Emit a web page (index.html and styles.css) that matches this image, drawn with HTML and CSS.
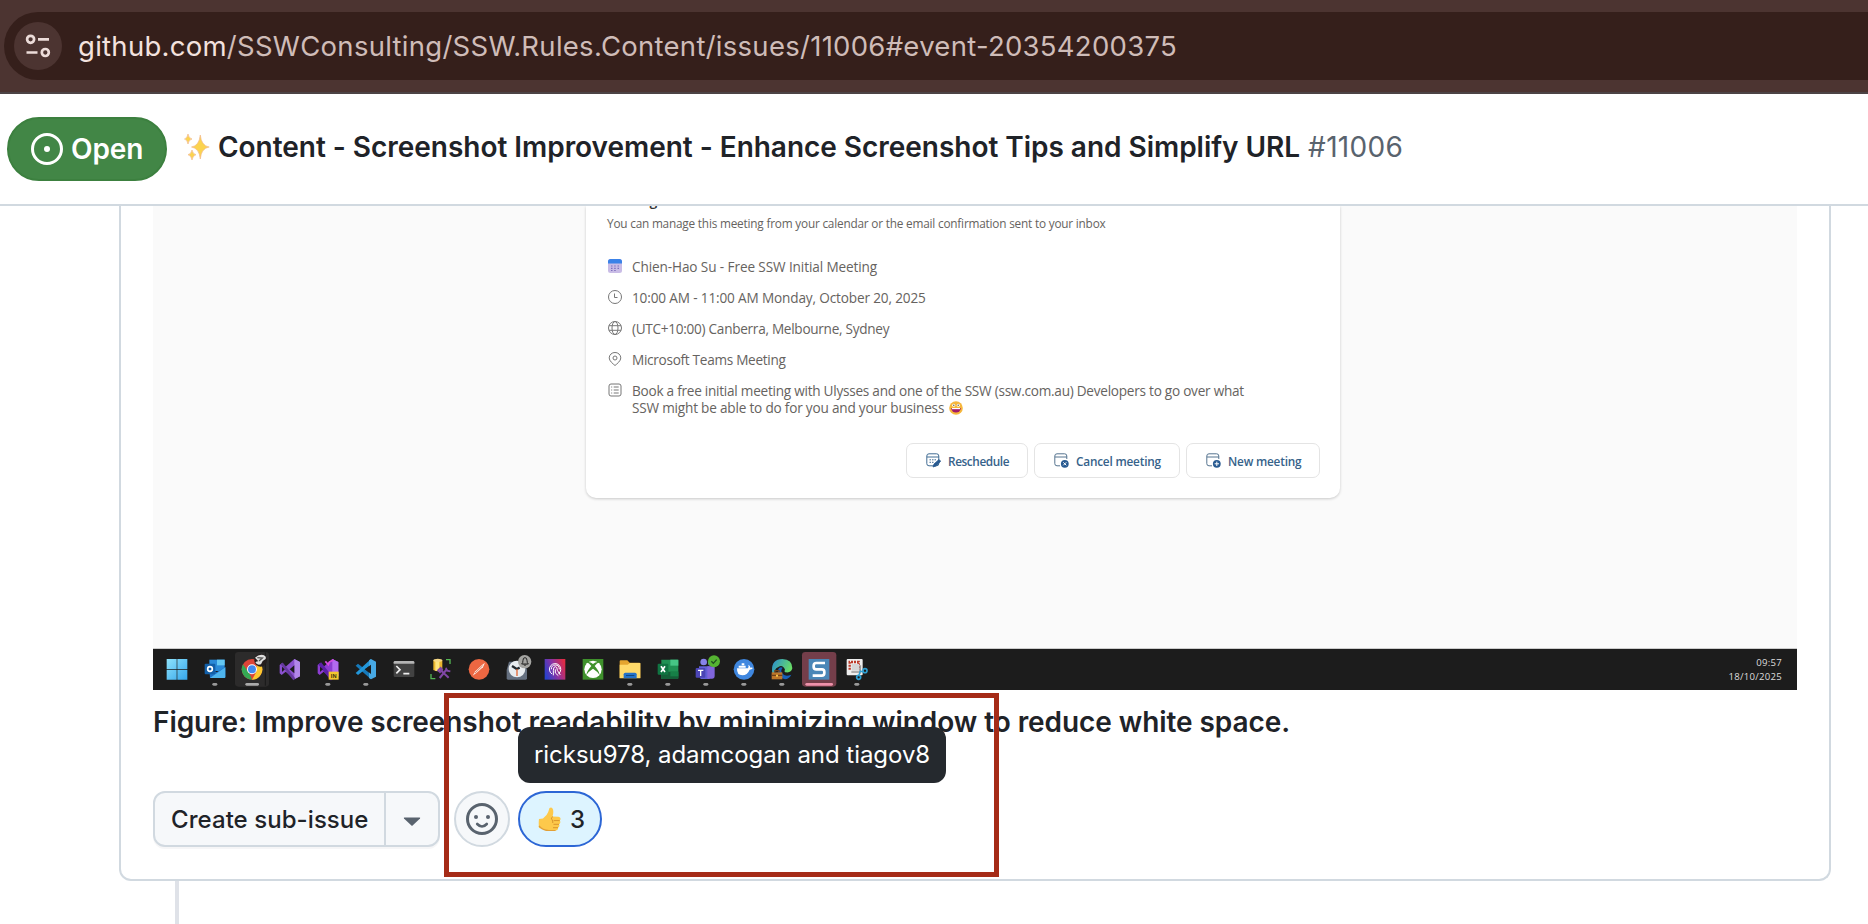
FILE: index.html
```html
<!DOCTYPE html>
<html lang="en">
<head>
<meta charset="utf-8">
<title>Content - Screenshot Improvement</title>
<link rel="stylesheet" href="styles.css">
</head>
<body>
<div class="browser-bar">
  <div class="omnibox">
    <span class="site-info">
      <svg width="48" height="48" viewBox="0 0 48 48" fill="none" stroke="#ecdcd9" stroke-width="2.7"><circle cx="16.6" cy="17.3" r="3.5"/><path d="M24 17.3h11M12.5 30.5h11"/><circle cx="31.3" cy="30.5" r="3.5"/></svg>
    </span>
    <span class="url"><span class="host">github.com</span>/SSWConsulting/SSW.Rules.Content/issues/11006#event-20354200375</span>
  </div>
</div>

<header class="issue-header">
  <span class="state">
    <svg width="32" height="32" viewBox="0 0 16 16" fill="#fff"><path d="M8 9.5a1.5 1.5 0 1 0 0-3 1.5 1.5 0 0 0 0 3Z"/><path d="M8 0a8 8 0 1 1 0 16A8 8 0 0 1 8 0ZM1.5 8a6.5 6.5 0 1 0 13 0 6.5 6.5 0 0 0-13 0Z"/></svg>
    <span class="state-text">Open</span>
  </span>
  <h1 class="title">
    <svg class="sparkles" width="26" height="28" viewBox="0 0 26 28"><g fill="#fbd34f" stroke="#f2b98c" stroke-width=".7"><path d="M16.300 2Q17.300 12.800 25.200 14Q17.300 15.200 16.300 26Q15.200 15.200 7.500 14Q15.200 12.800 16.300 2Z"/><path d="M4 1Q4.700 5.300 8 6Q4.700 6.700 4 11Q3.300 6.700.5 6Q3.300 5.300 4 1Z"/><path d="M8 17Q8.700 21 12 21.700Q8.700 22.400 8 27Q7.300 22.400 4 21.700Q7.300 21 8 17Z"/></g></svg>
    <span class="title-text">Content - Screenshot Improvement - Enhance Screenshot Tips and Simplify URL</span>
    <span class="number">#11006</span>
  </h1>
</header>

<main class="thread">
  <article class="issue-body">
    <div class="figure">
      <section class="meeting">
        <h2 class="meeting-title">Meeting details</h2>
        <p class="meeting-note">You can manage this meeting from your calendar or the email confirmation sent to your inbox</p>
        <ul class="details">
          <li><svg width="14" height="14" viewBox="0 0 14 14"><rect width="14" height="14" rx="2.500" fill="#c9bce6"/><path d="M0 4.500V2.500A2.500 2.500 0 0 1 2.500 0h9A2.500 2.500 0 0 1 14 2.500v2Z" fill="#3b82e8"/><path d="M3 7h1.500M6.200 7h1.500M9.500 7H11M3 9.300h1.500M6.200 9.300h1.500M9.500 9.300H11M3 11.500h1.500M6.200 11.500h1.500" stroke="#7f70bd" stroke-width="1.200"/></svg><span class="r1">Chien-Hao Su - Free SSW Initial Meeting</span></li>
          <li><svg class="line-icon" width="14" height="14" viewBox="0 0 14 14"><circle cx="7" cy="7" r="6.500"/><path d="M6.500 3.500v4H9.500"/></svg><span class="r2">10:00 AM - 11:00 AM Monday, October 20, 2025</span></li>
          <li><svg class="line-icon" width="14" height="14" viewBox="0 0 14 14"><circle cx="7" cy="7" r="6.500"/><ellipse cx="7" cy="7" rx="3" ry="6.500"/><path d="M1 4.700h12M1 9.300h12"/></svg><span class="r3">(UTC+10:00) Canberra, Melbourne, Sydney</span></li>
          <li><svg class="line-icon" width="14" height="14" viewBox="0 0 14 14"><path d="M7 13.500C5 11.800 1.200 9 1.200 5.900A5.600 5.600 0 0 1 7 .5a5.600 5.600 0 0 1 5.800 5.400C12.800 9 9 11.800 7 13.500Z"/><circle cx="7" cy="6" r="2"/></svg><span class="r4">Microsoft Teams Meeting</span></li>
          <li><svg class="line-icon" width="14" height="14" viewBox="0 0 14 14"><rect x="1" y="1" width="12" height="12" rx="2"/><path d="M3.200 4h1M5.700 4h5M3.200 7h1M5.700 7h5M3.200 10h1M5.700 10h5"/></svg><span class="r5">Book a free initial meeting with Ulysses and one of the SSW (ssw.com.au) Developers to go over what<br><span class="r6">SSW might be able to do for you and your business</span> <svg class="grin" width="14" height="14" viewBox="0 0 14 14"><circle cx="7" cy="7" r="6.800" fill="#f6b73c"/><path d="M2.200 7h9.600a4.800 4.600 0 0 1-9.600 0Z" fill="#a11b68"/><path d="M3 7h8v1.200H3Z" fill="#fff"/><circle cx="4.700" cy="4.200" r="1.500" fill="#fff"/><circle cx="9.300" cy="4.200" r="1.500" fill="#fff"/><circle cx="4.800" cy="4.200" r=".7" fill="#553"/><circle cx="9.200" cy="4.200" r=".7" fill="#553"/></svg></span></li>
        </ul>
        <div class="meeting-actions">
          <span class="mbtn b1"><svg width="15" height="15" viewBox="0 0 15 15" fill="none" stroke="#406c93"><rect x=".8" y=".8" width="12" height="12" rx="2.200"/><path d="M1 4h12" /><path d="M3.500 6.800h7M3.500 9.300h5" stroke-dasharray="1.500 1"/><path d="m7 14 1-3 5-4.500 1.700 1.700L10 13Z" fill="#285a91" stroke="#285a91" stroke-width=".8"/></svg><span>Reschedule</span></span>
          <span class="mbtn b2"><svg width="15" height="15" viewBox="0 0 15 15" fill="none" stroke="#56748f"><path d="M6 12.800H3A2.200 2.200 0 0 1 .8 10.600V3A2.200 2.200 0 0 1 3 .8h7.600A2.200 2.200 0 0 1 12.800 3v3M1 4h12"/><circle cx="10.800" cy="10.800" r="3.900" fill="#285a91" stroke="none"/><path d="m9.300 9.300 3 3m0-3-3 3" stroke="#fff"/></svg><span>Cancel meeting</span></span>
          <span class="mbtn b3"><svg width="15" height="15" viewBox="0 0 15 15" fill="none" stroke="#56748f"><path d="M6 12.800H3A2.200 2.200 0 0 1 .8 10.600V3A2.200 2.200 0 0 1 3 .8h7.600A2.200 2.200 0 0 1 12.800 3v3M1 4h12"/><circle cx="10.800" cy="10.800" r="3.900" fill="#285a91" stroke="none"/><path d="M10.800 8.600V13M8.600 10.800H13" stroke="#fff"/></svg><span>New meeting</span></span>
        </div>
      </section>

      <div class="taskbar">
        <div class="apps">
          <svg class="app" viewBox="-26 -30 113.400 123"><defs><linearGradient id="win" x2="1" y2="1"><stop stop-color="#8fe3fb"/><stop offset="1" stop-color="#35a6ec"/></linearGradient></defs><path d="M0 0h30v30H0ZM32 0h30v30H32ZM0 32h30v30H0ZM32 32h30v30H32Z" fill="url(#win)"/></svg>
          <svg class="app" viewBox="-26 -30 113.400 123"><path d="M14 2h46v34H14Z" fill="#2a8ad8"/><path d="M37 2h23v17H37Z" fill="#64c8f3"/><path d="M14 26l22 14 26-16v30q0 3-3 3H16Z" fill="#1f74ca"/><path d="m16 57 46-32v29q0 3-3 3Z" fill="#4eb5ee"/><rect y="14" width="32" height="32" rx="3" fill="#125fa8"/><circle cx="16" cy="30" r="7" fill="none" stroke="#fff" stroke-width="5"/><rect class="dot" x="23" y="72" width="15" height="8" rx="4"/></svg>
          <svg class="app" viewBox="-26 -30 113.400 123"><rect x="-20" y="-21" width="102" height="104" rx="10" fill="#2c2b2b"/><path d="M71-20v100" stroke="#191919" stroke-width="3"/><circle cx="31" cy="31" r="31" fill="#dc4438"/><path d="M4 16 24 45 31 62A31 31 0 0 1 4 16Z" fill="#34a853"/><path d="M31 62 44 39 45 17H59A31 31 0 0 1 31 62Z" fill="#fdc72f"/><circle cx="31" cy="31" r="15" fill="#fff"/><circle cx="31" cy="31" r="12" fill="#4288ed"/><circle cx="57" cy="4" r="19" fill="#241d1d"/><path d="M40-4q12-12 25-8 10 3 7 12l-9 6-5 10q-12 4-17-6 4-3 9-3Z" fill="#dedede"/><path d="m47-4 15 1-10 9" fill="none" stroke="#555" stroke-width="4"/><rect x="11" y="72" width="41" height="8" rx="4" fill="#aaa"/></svg>
          <svg class="app" viewBox="-26 -30 113.400 123"><path d="M44 0 61 9v43L44 61 18 38 6 48l-6-5V18l6-5 12 10Z" fill="#8a50ce"/><path d="M44 0 61 9v43l-17 9Z" fill="#b287ea"/><path d="M7 23v16l9-8ZM44 19 30 31l14 12Z" fill="#1c1c1c"/><path d="M6 13 44 61" stroke="#66399f" stroke-width="8"/></svg>
          <svg class="app" viewBox="-26 -30 113.400 123"><path d="M44 0 62 9v43L44 61 18 38 6 48l-6-5V18l6-5 12 10Z" fill="#8d3dd2"/><path d="M44 0 62 9v43l-18 9Z" fill="#b26af1"/><path d="m6 13 38 48" stroke="#5b20a8" stroke-width="11"/><path d="m23 7 9 10 3-8 13-7" fill="none" stroke="#d64be2" stroke-width="5"/><path d="M7 23v16l9-8Z" fill="#1c1c1c"/><rect x="33" y="38" width="30" height="24" fill="#f3c62e"/><text x="48" y="57" class="in-label">IN</text><rect class="dot" x="23" y="72" width="15" height="8" rx="4"/></svg>
          <svg class="app" viewBox="-26 -30 113.400 123"><path d="m0 20 7-6 39 31V61Z" fill="#167abb"/><path d="M46 0v17L7 48l-7-6Z" fill="#2297da"/><path d="m46 0 15 8v45l-15 8-6-4V4Z" fill="#47a8e4"/><path d="M46 17v28L27 31Z" fill="#1c1c1c"/><rect class="dot" x="23" y="72" width="15" height="8" rx="4"/></svg>
          <svg class="app" viewBox="-26 -30 113.400 123"><rect y="6" width="62" height="48" rx="4" fill="#424242"/><path d="M4 6h54q4 0 4 4v4H0v-4q0-4 4-4Z" fill="#b5b5b5"/><path d="m8 21 11 11L8 43M29 44h18" fill="none" stroke="#eee" stroke-width="5"/></svg>
          <svg class="app" viewBox="-26 -30 113.400 123"><path d="M8 4v29q15 8 27 0V4Z" fill="#ebb62f"/><path d="M14 6v29l12 2V5Z" fill="#ffe47d"/><ellipse cx="21.500" cy="4" rx="13.500" ry="5" fill="#f8d986"/><path d="M46 2h12v13M1 45v14h13" fill="none" stroke="#54b653" stroke-width="4"/><path d="m27 31 27 25M49 30 27 57" stroke="#8047a5" stroke-width="6"/><path d="m22 34 8-8 5 7-7 7ZM46 26l3 9 10 2" fill="none" stroke="#8047a5" stroke-width="5"/></svg>
          <svg class="app" viewBox="-26 -30 113.400 123"><circle cx="31" cy="31" r="31" fill="#ec6742"/><path d="m49 11-6 14-20 17-11 8 8-13 20-19Z" fill="#ffede6"/><path d="m19 42 23-22" stroke="#cf5938" stroke-width="2"/></svg>
          <svg class="app" viewBox="-26 -30 113.400 123"><path d="M7 8h48l6 25v25q0 4-4 4H4q-4 0-4-4V33Z" fill="#657080"/><circle cx="31" cy="30" r="25" fill="#e8ecef"/><path d="m16 21 14 9 9-4" fill="none" stroke="#20272c" stroke-width="7"/><path d="M31 30v21" stroke="#e46836" stroke-width="4"/><circle cx="54" cy="8" r="20" fill="#a5a5a2"/><path d="M45 15q4-3 4-11 0-8 6-8t6 8q0 8 4 11ZM51 17q4 4 8 0" fill="none" stroke="#202020" stroke-width="3"/></svg>
          <svg class="app" viewBox="-26 -30 113.400 123"><defs><linearGradient id="id" x1="0" y1=".7" x2="1" y2=".3"><stop stop-color="#2941cd"/><stop offset=".5" stop-color="#8c32a3"/><stop offset="1" stop-color="#e02c45"/></linearGradient></defs><path d="M0 0h62v62H0Z" fill="url(#id)"/><g fill="none" stroke="#fff" stroke-width="3"><path d="M22 45A17 17 0 1 1 42 44M26 49V34q0-11 6-11t6 11l9 14"/><path d="M32 31v11l9 8M20 31q0-13 12-13t12 13"/></g></svg>
          <svg class="app" viewBox="-26 -30 113.400 123"><path d="M0 0h62v62H0Z" fill="#3f912c"/><circle cx="31" cy="31" r="26" fill="#fff"/><path d="M12 10q9-4 19 5 10-9 19-5Q43 12 36 21q13 14 15 27-7-11-20-19-13 8-20 19 2-13 15-27-7-9-14-11Z" fill="#3f912c"/></svg>
          <svg class="app" viewBox="-26 -30 113.400 123"><path d="M3 4h20l7 7h29q3 0 3 3v43H0V7q0-3 3-3Z" fill="#e4a52f"/><path d="M0 17h24l7-5h31v46H0Z" fill="#ffda6a"/><path d="M12 58V46q0-5 5-5h29q5 0 5 5v12Z" fill="#2472c8"/><path d="M19 48h25v3H19Z" fill="#104881"/><rect class="dot" x="23" y="72" width="15" height="8" rx="4"/></svg>
          <svg class="app" viewBox="-26 -30 113.400 123"><path d="M11 2h48q3 0 3 3v52q0 3-3 3H11Z" fill="#209154"/><path d="M38 2h24v18H38Z" fill="#46c685"/><path d="M11 38h51v19q0 3-3 3H11Z" fill="#145f38"/><path d="M38 38h24v14H38Z" fill="#168047"/><rect y="14" width="32" height="33" rx="3" fill="#107442"/><path d="m10 22 12 17M22 22 10 39" stroke="#fff" stroke-width="5"/><rect class="dot" x="23" y="72" width="15" height="8" rx="4"/></svg>
          <svg class="app" viewBox="-26 -30 113.400 123"><circle cx="24" cy="9" r="10" fill="#8783e8"/><circle cx="45" cy="12" r="8" fill="#706be0"/><path d="M10 22h32v38H15Q8 52 10 22Z" fill="#6260d5"/><path d="M35 22h22v28q0 9-8 9H35Z" fill="#8065dc"/><rect y="27" width="29" height="29" rx="3" fill="#4b45b5"/><path d="M7 34h16M15 34v17" stroke="#fff" stroke-width="4"/><circle cx="55" cy="7" r="18" fill="#55b332"/><path d="m47 7 6 6 10-11" fill="none" stroke="#214d22" stroke-width="4"/><rect class="dot" x="23" y="72" width="15" height="8" rx="4"/></svg>
          <svg class="app" viewBox="-26 -30 113.400 123"><circle cx="31" cy="31" r="31" fill="#3f87df"/><path d="M10 28h33q3-5 1-11 6 3 6 9 5-2 8 1-4 5-10 5-7 17-22 17-17 0-16-21ZM15 20h21v6H15ZM24 13h8v6h-8Z" fill="#fff"/><rect class="dot" x="23" y="72" width="15" height="8" rx="4"/></svg>
          <svg class="app" viewBox="-26 -30 113.400 123"><defs><linearGradient id="edge" x2="1" y2=".4"><stop stop-color="#278bd3"/><stop offset="1" stop-color="#68dd67"/></linearGradient></defs><path d="M1 35Q0 0 32 0q30 1 30 28-3 14-19 12-7-1-3-8-7-16-20-8Q5 30 9 50Q1 46 1 35Z" fill="url(#edge)"/><path d="M20 30q-7 23 20 31 12-1 19-14-20 8-28-5-5-7 2-16-8-4-13 4Z" fill="#1760b8"/><path d="M0 40h32v21H0Z" fill="#bd7729"/><path d="M10 40v-5h12v5M0 49h32" fill="none" stroke="#6f4019" stroke-width="4"/><rect x="13" y="47" width="6" height="6" fill="#f4c24b"/><rect class="dot" x="23" y="72" width="15" height="8" rx="4"/></svg>
          <svg class="app" viewBox="-26 -30 113.400 123"><rect x="-20" y="-21" width="103" height="104" rx="10" fill="#743e4a"/><path d="M0 0h62v62H0Z" fill="#4b87b7"/><path d="M49 12H23q-8 0-8 8v4q0 7 8 7h17q7 0 7 8v3q0 8-8 8H12" fill="none" stroke="#fff" stroke-width="8"/><rect x="-10" y="72" width="83" height="8" rx="4" fill="#ed91aa"/></svg>
          <svg class="app" viewBox="-26 -30 113.400 123"><rect width="48" height="49" rx="3" fill="#eee"/><path d="M9 32V9h27v23" fill="none" stroke="#bd3927" stroke-width="7" stroke-dasharray="6 3"/><path d="M15 15h22v20H15Z" fill="#d5d5d5"/><path d="m41 19-1 25M14 39h23" stroke="#999" stroke-width="5"/><circle cx="55" cy="35" r="6" fill="none" stroke="#2e9fd2" stroke-width="5"/><circle cx="36" cy="55" r="6" fill="none" stroke="#2e9fd2" stroke-width="5"/><path d="m51 39-12-3M37 49l3-12" stroke="#2e9fd2" stroke-width="4"/><rect class="dot" x="23" y="72" width="15" height="8" rx="4"/></svg>
        </div>
        <div class="clock"><span>09:57</span><span>18/10/2025</span></div>
      </div>
    </div>

    <p class="caption">Figure: Improve screenshot readability by minimizing window to reduce white space.</p>

    <div class="actions">
      <div class="split-button">
        <span class="create">Create sub-issue</span>
        <span class="caret"><svg width="18" height="9" viewBox="0 0 18 9"><path d="M1.500.5h15Q17.600.5 17 1.500L9.600 8.400Q9 8.900 8.400 8.400L1 1.500Q.4.500 1.500.5Z" fill="#59636e"/></svg></span>
      </div>
      <span class="add-reaction"><svg width="32" height="32" viewBox="0 0 16 16" fill="#59636e"><path d="M8 0a8 8 0 1 1 0 16A8 8 0 0 1 8 0ZM1.500 8a6.500 6.500 0 1 0 13 0 6.500 6.500 0 0 0-13 0Z"/><circle cx="5" cy="7" r="1"/><circle cx="11" cy="7" r="1"/><path d="M5.600 10.500Q8 13 10.400 10.500" fill="none" stroke="#59636e" stroke-width="1.300" stroke-linecap="round"/></svg></span>
      <span class="reaction">
        <svg width="23" height="25" viewBox="0 0 23 25"><path d="M11.500 1Q14-.5 15 2.500q.8 3-.5 7l6 .2q2.300.4 2 2.300 0 1-.8 1.600 1 .9.5 2.200-.2 1-1.200 1.500.8 1.100.2 2.200-.4.900-1.200 1.200.5 2.700-2.700 3H11q-3 0-5-1.700L1 21Q.4 16 1 12l4-.5Q9 8.500 10.200 5Z" fill="#fdc94b"/><path d="M21.700 13.600h-6M21 17.300h-5.500M20 20.700h-5M15 9.500q-3 1.500-1 3.200 1 1 .8 3.300" fill="none" stroke="#d9952d"/><path d="M1 19q4 4.500 10 4.500h6.500" fill="none" stroke="#e2a036" stroke-width="1.200"/></svg>
        <span>3</span>
        <span class="tooltip">ricksu978, adamcogan and tiagov8</span>
      </span>
      <span class="highlight"></span>
    </div>
  </article>
  <div class="timeline"></div>
</main>
</body>
</html>
```
FILE: styles.css
```css
* { box-sizing: border-box; }
body {
  margin: 0;
  height: 924px;
  overflow: hidden;
  display: flex;
  flex-direction: column;
  background: #fff;
  color: #1f2328;
  font-family: Inter, "Liberation Sans", sans-serif;
  white-space: nowrap;
}
svg { display: block; flex: none; }

/* Browser address bar */
.browser-bar {
  height: 94px;
  flex: none;
  padding: 12px 0 0 4px;
  background: #4c3431;
  border-bottom: 2px solid #4c4345;
}
.omnibox {
  height: 68px;
  display: flex;
  align-items: center;
  padding-left: 10px;
  border-radius: 34px 0 0 34px;
  background: #351f1b;
}
.site-info { width: 48px; height: 48px; border-radius: 50%; background: #4c3431; }
.url { margin-left: 16px; font-size: 27.500px; line-height: 36px; color: #cfbcb8; letter-spacing: 0.275px; }
.host { color: #f3e2df; }

/* Sticky issue header */
.issue-header {
  height: 112px;
  flex: none;
  display: flex;
  align-items: flex-start;
  padding: 23px 0 0 7px;
  border-bottom: 2px solid #d1d9e0;
}
.state {
  width: 160px;
  height: 64px;
  display: flex;
  align-items: center;
  gap: 8px;
  padding-left: 22px;
  border: 2px solid #3c803f;
  border-radius: 32px;
  background: #428646;
  color: #fff;
  font-size: 28px;
  font-weight: 600;
}
.state-text { letter-spacing: -0.1px; }
.title {
  display: flex;
  align-items: center;
  margin: 12px 0 0 17px;
  font-size: 28px;
  line-height: 36px;
  font-weight: 600;
}
.title-text { margin-left: 8px; letter-spacing: -0.03px; }
.number { margin-left: 8px; font-weight: 400; color: #59636e; letter-spacing: 0.3px; }

/* Issue body */
.thread { flex: 1; min-height: 0; padding-left: 119px; }
.issue-body {
  width: 1712px;
  height: 675px;
  padding: 0 32px;
  border: 2px solid #d1d9e0;
  border-top: 0;
  border-radius: 0 0 12px 12px;
}
.timeline { width: 4px; height: 43px; margin-left: 56px; background: #dfe2e8; }
.figure { width: 1644px; height: 484px; display: flex; flex-direction: column; overflow: hidden; background: #fafafa; }

.meeting {
  width: 754px;
  height: 292px;
  margin-left: 433px;
  padding-left: 21px;
  background: #fff;
  border-radius: 0 0 10px 10px;
  box-shadow: 0 1px 3px rgba(0, 0, 0, .2);
  font-family: "Open Sans", "Noto Sans", sans-serif;
  color: #666360;
}
.meeting-title { margin: -13px 0 0; font-size: 14px; line-height: 16px; font-weight: 600; color: #333; letter-spacing: -0.8px; }
.meeting-note { margin: 6px 0 0; font-size: 11.800px; line-height: 16px; letter-spacing: -0.2px; }
.details { display: flex; flex-direction: column; gap: 14px; margin: 27px 0 0; padding: 0; list-style: none; font-size: 13.600px; line-height: 17px; letter-spacing: -0.2px; }
.details li { display: flex; align-items: flex-start; gap: 10px; padding-left: 1px; }
.details li > svg { margin-top: 1px; }
.r1 { letter-spacing: -0.11px; }
.r2 { letter-spacing: -0.15px; }
.r3 { letter-spacing: -0.28px; }
.r4 { letter-spacing: -0.29px; }
.r5 { letter-spacing: -0.25px; }
.r6 { letter-spacing: -0.2px; }
.line-icon { fill: none; stroke: #777; stroke-width: 1; }
.grin { display: inline-block; margin-left: 2px; vertical-align: -2px; }
.meeting-actions { display: flex; justify-content: flex-end; gap: 6px; margin: 27px 20px 0 0; }
.mbtn {
  height: 35px;
  display: flex;
  align-items: center;
  gap: 7px;
  padding-left: 19px;
  border: 1px solid #e4e4e4;
  border-radius: 7px;
  color: #36628a;
  font-size: 11.800px;
  font-weight: 600;
}
.b1 { width: 122px; letter-spacing: -0.4px; }
.b2 { width: 146px; letter-spacing: -0.2px; }
.b3 { width: 134px; letter-spacing: -0.2px; }

/* Taskbar */
.taskbar {
  height: 42px;
  margin-top: auto;
  display: flex;
  justify-content: space-between;
  padding: 0 15px 0 4.800px;
  border-top: 1px solid #ccc;
  background: #1c1c1c;
}
.apps { display: flex; }
.app { width: 37.800px; height: 41px; }
.dot { fill: #999; }
.in-label { font: 700 17px "Liberation Sans", sans-serif; text-anchor: middle; fill: #3a3010; }
.clock {
  display: flex;
  flex-direction: column;
  align-items: flex-end;
  padding-top: 7px;
  color: #ddd;
  font: 9.600px/14px "Open Sans", sans-serif;
  letter-spacing: 0.25px;
}

/* Caption and actions */
.caption { margin: 14px 0 0; font-size: 28px; line-height: 36px; font-weight: 600; letter-spacing: -0.07px; }
.actions { position: relative; display: flex; margin-top: 51px; font-size: 24px; line-height: 32px; font-weight: 500; }
.split-button {
  width: 287px;
  height: 56px;
  display: flex;
  border: 2px solid #d1d9e0;
  border-radius: 12px;
  background: #f6f8fa;
  box-shadow: 0 2px 0 rgba(31, 35, 40, .04);
}
.create { width: 231px; display: flex; align-items: center; padding: 1px 0 0 16px; border-right: 2px solid #d1d9e0; letter-spacing: 0.06px; }
.caret { flex: 1; display: flex; align-items: center; padding: 5px 0 0 17px; }
.add-reaction {
  width: 56px;
  height: 56px;
  display: grid;
  place-items: center;
  margin-left: 14px;
  border: 2px solid #d1d9e0;
  border-radius: 50%;
  background: #f6f8fa;
}
.reaction {
  position: relative;
  width: 84px;
  height: 56px;
  display: flex;
  align-items: center;
  gap: 9px;
  margin-left: 8px;
  padding: 1px 0 0 18px;
  border: 2px solid #2c66d5;
  border-radius: 28px;
  background: #ddf4ff;
}
.tooltip {
  position: absolute;
  left: -2px;
  bottom: 62px;
  width: 428px;
  height: 56px;
  display: flex;
  align-items: center;
  padding-left: 16px;
  border-radius: 12px;
  background: #25292e;
  color: #fff;
  font-weight: 400;
  letter-spacing: -0.05px;
}
.highlight {
  position: absolute;
  left: 291px;
  top: -98px;
  width: 555px;
  height: 184px;
  border: 5px solid #a52b17;
}
```
